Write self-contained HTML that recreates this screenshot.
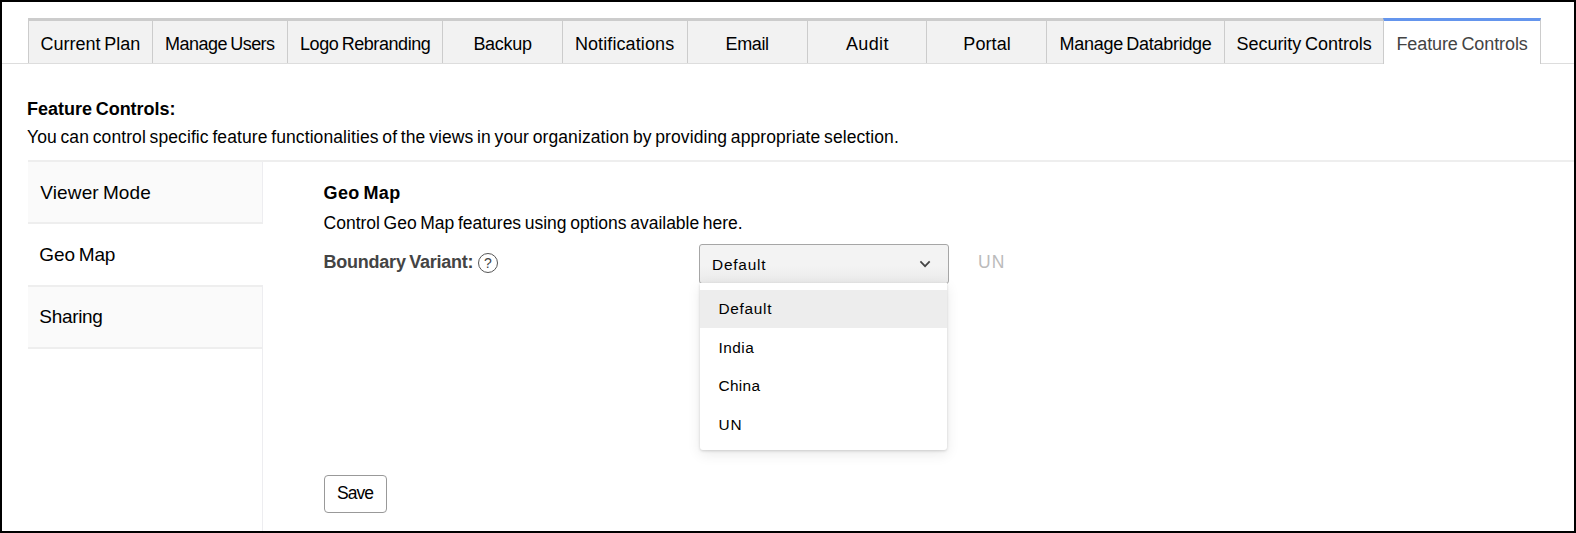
<!DOCTYPE html>
<html lang="en"><head><meta charset="utf-8"><title>Feature Controls</title>
<style>
html,body{margin:0;padding:0;background:#fff}
body{width:1576px;height:533px;position:relative;overflow:hidden;font-family:"Liberation Sans", sans-serif;color:#000}
ul,li,h1,h2,p{margin:0;padding:0;list-style:none;font-weight:400}
a{color:inherit;text-decoration:none}
.frame{position:absolute;left:0;top:0;width:1572px;height:529px;border:2px solid #000;z-index:50;pointer-events:none}
.t{position:absolute;display:block;white-space:nowrap;line-height:24px;height:24px}
.tabline{position:absolute;left:2px;top:63px;width:1572px;height:1px;background:#ddd}
.tabs{position:absolute;left:0;top:0;width:0;height:0}
.tab{position:absolute;top:18px;height:42px;border-top:3px solid #ccc;border-left:1px solid #ccc;background:#f2f2f2}
.tab.act{background:#fff;border-top-color:#6495ed;border-right:1px solid #ccc;height:43px}
.head{position:absolute;left:0;top:90px;width:0;height:0}
.rule{position:absolute;left:28px;top:160px;width:1546px;height:2px;background:#eee}
.sidebar{position:absolute;left:28px;top:162px;width:234px;height:185px}
.item{position:absolute;left:0;width:234px;background:#fafafa}
.item.sel{background:#fff;width:235px}
.sep{position:absolute;left:28px;width:235px;height:2px;background:#eee}
.vline{position:absolute;left:262px;width:1px;background:#ededf0}
.content{position:absolute;left:263px;top:162px;width:1311px;height:369px}
.help{position:absolute;width:18px;height:18px;border:1px solid #555;border-radius:50%;text-align:center;color:#444;font-size:14px;line-height:19px}
.select{position:absolute;width:248px;height:38px;border:1px solid #a6a6a6;border-radius:3px;background:linear-gradient(#f3f3f3 55%,#eaeaea)}
.chev{position:absolute;left:218px;top:14px}
.dd{position:absolute;width:247px;height:167px;background:#fff;border-radius:0 0 3px 3px;box-shadow:0 1px 3px rgba(0,0,0,.16),0 4px 14px rgba(0,0,0,.09);z-index:5}
.opt{position:absolute;left:0;width:247px;height:38.5px}
.opt.hl{background:#ededed;height:38px}
.btn{position:absolute;box-sizing:content-box;width:61px;height:36px;padding:0;margin:0;border:1px solid #999;border-radius:4px;background:#fff;font:inherit;color:inherit}
</style></head>
<body>
<div class="tabline"></div>
<ul class="tabs">
  <li class="tab" style="left:28px;width:123px"><a class="t" style="left:11.5px;top:10.8px;font-size:18px;letter-spacing:0px;word-spacing:-1.26px">Current Plan</a></li>
  <li class="tab" style="left:152px;width:134px"><a class="t" style="left:12.0px;top:10.8px;font-size:18px;letter-spacing:-0.518px;word-spacing:-1.26px">Manage Users</a></li>
  <li class="tab" style="left:287px;width:154px"><a class="t" style="left:12.0px;top:10.8px;font-size:18px;letter-spacing:-0.429px;word-spacing:-1.26px">Logo Rebranding</a></li>
  <li class="tab" style="left:442px;width:119px"><a class="t" style="left:30.4px;top:10.8px;font-size:18px;letter-spacing:-0.28px;word-spacing:-1.26px">Backup</a></li>
  <li class="tab" style="left:562px;width:124px"><a class="t" style="left:11.9px;top:10.8px;font-size:18px;letter-spacing:0.1px;word-spacing:-1.26px">Notifications</a></li>
  <li class="tab" style="left:687px;width:119px"><a class="t" style="left:37.6px;top:10.8px;font-size:18px;letter-spacing:-0.4px;word-spacing:-1.26px">Email</a></li>
  <li class="tab" style="left:807px;width:118px"><a class="t" style="left:38.0px;top:10.8px;font-size:18px;letter-spacing:0.35px;word-spacing:-1.26px">Audit</a></li>
  <li class="tab" style="left:926px;width:119px"><a class="t" style="left:36.3px;top:10.8px;font-size:18px;letter-spacing:0.08px;word-spacing:-1.26px">Portal</a></li>
  <li class="tab" style="left:1046px;width:177px"><a class="t" style="left:12.5px;top:10.8px;font-size:18px;letter-spacing:-0.281px;word-spacing:-1.26px">Manage Databridge</a></li>
  <li class="tab" style="left:1224px;width:158px"><a class="t" style="left:11.5px;top:10.8px;font-size:18px;letter-spacing:-0.031px;word-spacing:-1.26px">Security Controls</a></li>
  <li class="tab act" style="left:1383px;width:156px"><a class="t" style="left:12.4px;top:10.8px;font-size:18px;letter-spacing:-0.093px;word-spacing:-1.26px;color:#444">Feature Controls</a></li>
</ul>
<div class="head">
  <h1 class="t" style="left:27.0px;top:6.5px;font-size:18px;letter-spacing:-0.012px;word-spacing:-1.26px;font-weight:700">Feature Controls:</h1>
  <p class="t" style="left:27.0px;top:34.7px;font-size:17.5px;letter-spacing:0.09px;word-spacing:-1.23px">You can control specific feature functionalities of the views in your organization by providing appropriate selection.</p>
</div>
<div class="rule"></div>
<ul class="sidebar">
  <li class="item" style="top:0;height:60px"><span class="t" style="left:12.3px;top:18.6px;font-size:19px;letter-spacing:0.13px;word-spacing:-1.33px">Viewer Mode</span></li>
  <li class="item sel" style="top:62px;height:61px"><span class="t" style="left:11.3px;top:19.4px;font-size:19px;letter-spacing:-0.117px;word-spacing:-1.33px">Geo Map</span></li>
  <li class="item" style="top:125px;height:60px"><span class="t" style="left:11.3px;top:18.4px;font-size:19px;letter-spacing:-0.317px;word-spacing:-1.33px">Sharing</span></li>
</ul>
<div class="sep" style="top:222px"></div>
<div class="sep" style="top:285px"></div>
<div class="sep" style="top:347px"></div>
<div class="vline" style="top:162px;height:61px"></div>
<div class="vline" style="top:285px;height:246px"></div>
<div class="content">
  <h2 class="t" style="left:60.6px;top:19.1px;font-size:18px;letter-spacing:0.3px;word-spacing:-1.26px;font-weight:700">Geo Map</h2>
  <p class="t" style="left:60.6px;top:48.9px;font-size:17.5px;letter-spacing:-0.006px;word-spacing:-1.23px">Control Geo Map features using options available here.</p>
  <label class="t" style="left:60.6px;top:87.8px;font-size:18px;letter-spacing:-0.244px;word-spacing:-1.26px;font-weight:700;color:#444">Boundary Variant:</label>
  <div class="help" style="left:215px;top:91px">?</div>
  <div class="select" style="left:436px;top:82px">
    <span class="t" style="left:12.0px;top:7.9px;font-size:15.4px;letter-spacing:0.783px;word-spacing:-1.08px">Default</span>
    <svg class="chev" width="14" height="10" viewBox="0 0 14 10"><path d="M2.4 2.4 L7.05 7.2 L11.7 2.4" fill="none" stroke="#444" stroke-width="1.7"/></svg>
  </div>
  <span class="t muted" style="left:715.1px;top:87.9px;font-size:17.5px;letter-spacing:1px;word-spacing:-1.23px;color:#bbb">UN</span>
  <ul class="dd" style="left:437px;top:121px">
    <li class="opt hl" style="top:7px"><span class="t" style="left:18.4px;top:7.3px;font-size:15.4px;letter-spacing:0.733px;word-spacing:-1.08px">Default</span></li>
    <li class="opt" style="top:45.5px"><span class="t" style="left:18.4px;top:7.3px;font-size:15.4px;letter-spacing:0.525px;word-spacing:-1.08px">India</span></li>
    <li class="opt" style="top:84px"><span class="t" style="left:18.4px;top:7.3px;font-size:15.4px;letter-spacing:0.375px;word-spacing:-1.08px">China</span></li>
    <li class="opt" style="top:122.5px"><span class="t" style="left:18.4px;top:7.4px;font-size:15.4px;letter-spacing:1px;word-spacing:-1.08px">UN</span></li>
  </ul>
  <button class="btn" style="left:61px;top:313px"><span class="t" style="left:11.9px;top:4.7px;font-size:17.5px;letter-spacing:-0.933px;word-spacing:-1.23px">Save</span></button>
</div>
<div class="frame"></div>
</body></html>
